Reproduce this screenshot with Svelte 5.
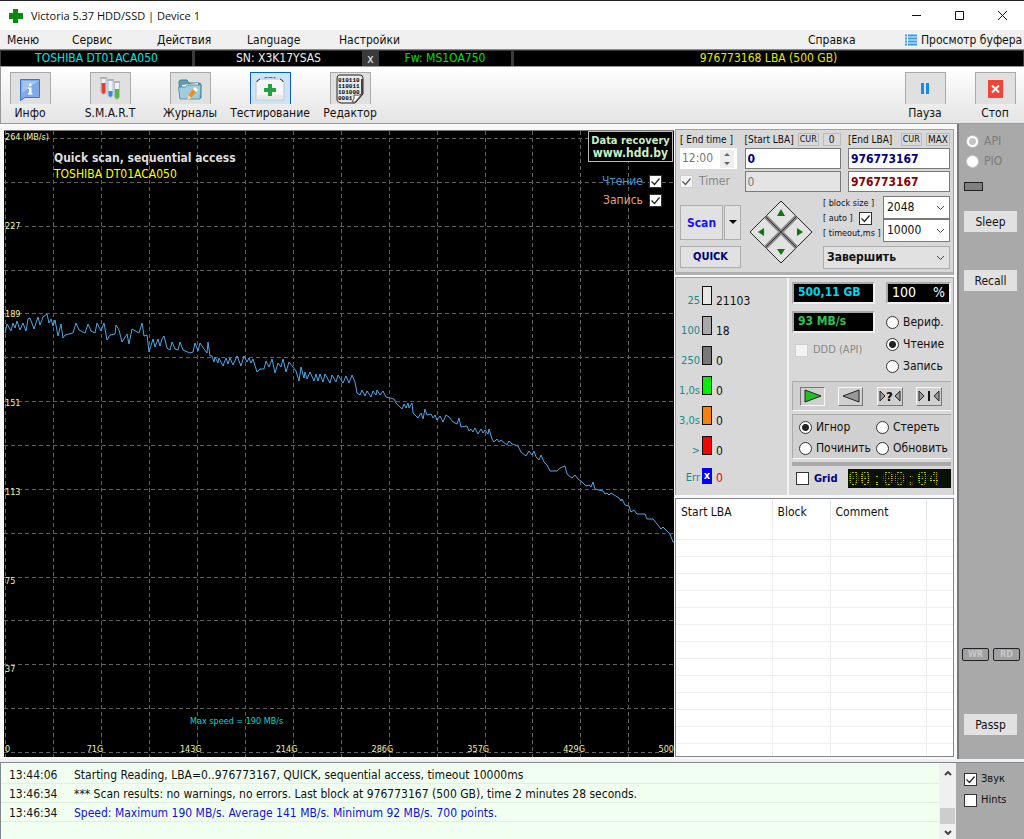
<script lang="ts">
  const menu = ['Меню', 'Сервис', 'Действия', 'Language', 'Настройки'];

  const yLabels = ['264 (MB/s)', '227', '189', '151', '113', '75', '37'];
  const xLabels = ['71G', '143G', '214G', '286G', '357G', '429G'];

  const gridX = Array.from({ length: 14 }, (_, i) => 1.5 + Math.round(i * 47.95));
  const gridY = Array.from({ length: 15 }, (_, i) => 7.5 + Math.round(i * 43.85));

  // x,y pairs in a 670x626 plot
  const speed = `1,202 3,193 7,200 9,192 11,197 13,190 16,199 19,192 22,200 24,188 26,187 30,198 34,186 36,194
    39,186 43,183 45,192 47,188 49,195 51,189 54,205 57,193 59,207 61,204 69,202 72,192 75,199 81,202 84,193
    87,200 91,202 93,192 97,200 100,192 103,209 106,204 111,203 112,194 115,199 118,211 123,203 125,213 128,198
    135,202 138,192 140,205 143,204 145,221 149,208 151,216 154,208 156,215 158,208 160,205 163,217 166,219
    168,211 171,218 174,219 176,211 179,219 186,222 189,221 191,212 194,220 196,212 200,218 203,222 204,211
    206,225 208,225 210,231 211,226 214,232 215,227 219,235 222,227 224,233 226,227 229,234 233,225 237,235
    240,225 243,231 245,227 247,232 249,228 253,241 256,238 260,238 262,230 265,236 268,228 271,242 274,232
    277,236 279,228 282,241 285,231 289,236 292,240 295,250 297,236 300,247 301,241 303,248 306,241 310,250
    312,243 314,250 316,243 319,251 321,243 326,252 328,244 332,251 334,244 339,252 342,245 345,252 348,244
    351,251 353,262 356,264 358,259 361,265 363,260 367,266 369,260 372,264 373,259 376,264 379,260 382,266
    386,267 390,268 392,272 398,278 400,273 402,277 404,272 405,277 408,272 409,282 414,287 417,282 419,288
    421,278 423,284 427,283 429,287 431,284 433,289 436,285 439,291 442,284 445,286 449,291 453,293 455,287
    457,296 463,295 465,300 467,298 469,301 471,297 474,303 477,298 479,302 481,299 484,303 485,298 488,308
    490,311 493,308 495,311 497,309 503,314 505,310 508,313 514,315 517,321 522,325 525,320 528,324 530,320
    532,326 535,329 537,324 540,331 543,334 546,340 553,340 556,337 561,335 563,343 568,347 571,344 574,348
    578,351 582,355 585,354 587,356 589,351 591,358 599,360 601,363 603,362 605,364 607,362 615,367 617,370
    618,368 621,374 625,375 627,381 630,379 633,383 641,383 643,388 649,388 653,393 657,398 659,396 666,403
    669,411 670,411`;

  const blocks = [
    { name: '25', count: '21103', kind: 'b25' },
    { name: '100', count: '18', kind: 'b100' },
    { name: '250', count: '0', kind: 'b250' },
    { name: '1,0s', count: '0', kind: 'b1s' },
    { name: '3,0s', count: '0', kind: 'b3s' },
    { name: '>', count: '0', kind: 'more' },
    { name: 'Err', count: '0', kind: 'err' }
  ];

  const log = [
    { time: '13:44:06', text: 'Starting Reading, LBA=0..976773167, QUICK, sequential access, timeout 10000ms', info: false },
    { time: '13:46:34', text: '*** Scan results: no warnings, no errors. Last block at 976773167 (500 GB), time 2 minutes 28 seconds.', info: false },
    { time: '13:46:34', text: 'Speed: Maximum 190 MB/s. Average 141 MB/s. Minimum 92 MB/s. 700 points.', info: true }
  ];

  const emptyRows = Array(13).fill(0);

  let mode = $state('read');
  let action = $state('ignore');
  let iface = $state('api');
  let showRead = $state(true);
  let showWrite = $state(true);
  let auto = $state(true);
  let sound = $state(true);
</script>

<div class="window">
  <header class="titlebar">
    <svg width="16" height="16" viewBox="0 0 16 16"><path d="M5 1h5v4h5v6h-5v4H5v-4H1V5h4z" fill="#0a8a0a" /></svg>
    <span class="title">Victoria 5.37 HDD/SSD | Device 1</span>
    <button class="win" aria-label="Minimize"><svg width="11" height="11"><path d="M1 5.5h9" stroke="#111" /></svg></button>
    <button class="win" aria-label="Maximize"><svg width="11" height="11"><path d="M1.5 1.5h8v8h-8z" fill="none" stroke="#111" /></svg></button>
    <button class="win" aria-label="Close"><svg width="11" height="11"><path d="M1 1l9 9M10 1l-9 9" stroke="#111" /></svg></button>
  </header>

  <nav class="menubar">
    {#each menu as item}
      <button>{item}</button>
    {/each}
    <button>Справка</button>
    <button class="buffer">
      <svg width="12" height="12"><path d="M0 1.5h2M3 1.5h9M0 4.5h2M3 4.5h9M0 7.5h2M3 7.5h9M0 10.5h2M3 10.5h9" stroke="#3b9be8" stroke-width="2" /></svg>
      Просмотр буфера
    </button>
  </nav>

  <div class="device">
    <span class="model">TOSHIBA DT01ACA050</span>
    <span>SN: X3K17YSAS</span>
    <button aria-label="Hide serial number">x</button>
    <span class="fw">Fw: MS1OA750</span>
    <span class="lba">976773168 LBA (500 GB)</span>
  </div>

  <div class="toolbar">
    <button class="tool">
      <span class="pic">
        <svg width="22" height="24" viewBox="0 0 22 24">
          <path d="M1.5 2.5h19v18H6l-4.500 3z" fill="#7eaae9" stroke="#3f73c4" />
          <path d="M3 4h16L3 16z" fill="#a3c4f3" />
          <path d="M10 6.500h2.500v2.500H10zM9 10.500h3.500v5.500h1v1.500H9V16h1v-4H9z" fill="#fff" />
        </svg>
      </span>
      Инфо
    </button>
    <button class="tool">
      <span class="pic">
        <svg width="22" height="26" viewBox="0 0 22 26">
          <path d="M2 2v14q2.500 5 5 0V2z" fill="#eef3f8" stroke="#b4bcc6" /><path d="M2.500 7h4v9q-2 4-4 0z" fill="#e0402e" />
          <path d="M9 4v15q2.500 5 5 0V4z" fill="#eef3f8" stroke="#b4bcc6" /><path d="M9.500 15h4v4q-2 4-4 0z" fill="#2f8ae8" />
          <path d="M15.500 6v15q2.500 5 5 0V6z" fill="#eef3f8" stroke="#b4bcc6" /><path d="M16 13h4v8q-2 4-4 0z" fill="#53bb3c" />
          <path d="M1 2h7M8 4h7M15 6h6" stroke="#8d959e" />
        </svg>
      </span>
      S.M.A.R.T
    </button>
    <button class="tool">
      <span class="pic">
        <svg width="24" height="24" viewBox="0 0 24 24">
          <path d="M1 5q0-2 2-2h6l2 3h10q2 0 2 2v13H2z" fill="#5e9cb2" stroke="#457f95" />
          <path d="M4 8l16-2v6H4z" fill="#eef6f8" />
          <path d="M0.500 10h7l2-2h13.500l-1 14H2z" fill="#9fcddb" stroke="#5795aa" />
          <path d="M9 23l1.500-5L15 12l3 3-5 6z" fill="#f28c1c" /><path d="M9 23l1.500-5 3 3z" fill="#f8e2b8" />
          <path d="M15 12l2-2 3 3-2 2z" fill="#fff" />
        </svg>
      </span>
      Журналы
    </button>
    <button class="tool active">
      <span class="pic">
        <svg width="32" height="26" viewBox="0 0 32 26">
          <path d="M11 3V1.500h10V3" fill="none" stroke="#666" stroke-dasharray="4 1" />
          <path d="M5 3h22l3 3v18H2V6z" fill="#f5f6f6" stroke="#c2c6ca" />
          <path d="M3 6v-1l3-2M26 3l3 2v1" stroke="#333" fill="none" /><path d="M3 19h26v4H3z" fill="#e6e8e9" />
          <path d="M14 8h4v4h4v4h-4v4h-4v-4h-4v-4h4z" fill="#21a343" />
        </svg>
      </span>
      Тестирование
    </button>
    <button class="tool">
      <span class="pic">
        <svg width="28" height="30" viewBox="0 0 28 30">
          <path d="M3 1h21q3 0 3 3v16l-8 9H6q-5 0-5-4V5q0-4 2-4z" fill="#e9e9e9" stroke="#222" />
          <path d="M26 5v15l-7 8" fill="none" stroke="#444" stroke-width="2" />
          <path d="M16 28q3-3 2-7 5 1 8-1l-7 8z" fill="#fff" stroke="#555" />
          <g class="bits"><text x="2" y="8">010110</text><text x="2" y="14">110011</text><text x="2" y="20">101000</text><text x="2" y="26">0001</text></g>
        </svg>
      </span>
      Редактор
    </button>
    <span class="spacer"></span>
    <button class="tool side">
      <span class="pic"><svg width="10" height="12"><path d="M1 0h3v11H1zM6 0h3v11H6z" fill="#168af5" /></svg></span>
      Пауза
    </button>
    <button class="tool side">
      <span class="pic"><svg width="15" height="18"><path d="M0 0h15v18H0z" fill="#f04438" /><path d="M4 5.500l7 7M11 5.500l-7 7" stroke="#fff" stroke-width="2" /></svg></span>
      Стоп
    </button>
  </div>

  <main>
    <section class="graph">
      <svg class="plot" viewBox="0 0 670 626" preserveAspectRatio="none">
        <g class="grid">
          {#each gridX as x}
            <line x1={x} x2={x} y1="0" y2="626" />
          {/each}
          {#each gridY as y}
            <line x1="0" x2="670" y1={y} y2={y} />
          {/each}
        </g>
        <polyline points={speed} />
      </svg>
      <div class="y-axis">
        {#each yLabels as label}
          <span>{label}</span>
        {/each}
      </div>
      <div class="x-axis">
        <span class="zero">0</span>
        {#each xLabels as label}
          <span>{label}</span>
        {/each}
        <span class="end">500</span>
      </div>
      <div class="caption">
        <b>Quick scan, sequential access</b>
        <span>TOSHIBA DT01ACA050</span>
      </div>
      <a class="recovery" href="http://www.hdd.by">Data recovery<span>www.hdd.by</span></a>
      <div class="legend">
        <label class="read">Чтение <input type="checkbox" bind:checked={showRead} /></label>
        <label class="write">Запись <input type="checkbox" bind:checked={showWrite} /></label>
      </div>
      <span class="max">Max speed = 190 MB/s</span>
    </section>

    <section class="panels">
      <div class="box params">
        <div class="lba-grid">
          <label for="endtime">[ End time ]</label>
          <div class="head"><label for="start">[Start LBA]</label><button>CUR</button><button>0</button></div>
          <div class="head"><label for="end">[End LBA]</label><button>CUR</button><button>MAX</button></div>
          <div class="time">
            <input id="endtime" value="12:00" disabled />
            <svg width="14" height="18"><path d="M0 0h14v18H0z" fill="#eee" /><path d="M4 6l3-3 3 3zM4 12l3 3 3-3z" fill="#666" /></svg>
          </div>
          <input id="start" class="num" value="0" />
          <input id="end" class="num" value="976773167" />
          <label class="timer"><input type="checkbox" checked disabled /> Timer</label>
          <input class="num off" value="0" disabled aria-label="Current start LBA" />
          <input class="num red" value="976773167" aria-label="Current end LBA" />
        </div>
        <div class="scan-row">
          <div class="scan">
            <button class="go">Scan</button>
            <button class="drop" aria-label="Scan options"><svg width="8" height="5"><path d="M0 0h8L4 4z" /></svg></button>
            <button class="quick">QUICK</button>
          </div>
          <svg class="pad" width="64" height="64" viewBox="0 0 64 64">
            <path d="M32 1l31 31-31 31L1 32z" fill="#e2e2e2" stroke="#222" />
            <path d="M16.500 16.500l31 31M47.500 16.500l-31 31" stroke="#888" stroke-width="4" />
            <path d="M16.500 16.500l31 31M47.500 16.500l-31 31" stroke="#333" />
            <path d="M28 16l4-7 4 7zM28 49l4 6 4-6zM15 28l-6 4 6 4zM48 28l6 4-6 4z" fill="#087a08" />
          </svg>
          <div class="opts">
            <div class="opt-labels">
              <label for="bsize">[ block size ]</label>
              <label>[ auto ] <input type="checkbox" bind:checked={auto} /></label>
              <label for="tout">[ timeout,ms ]</label>
            </div>
            <div class="opt-selects">
              <select id="bsize"><option>2048</option></select>
              <select id="tout"><option>10000</option></select>
            </div>
            <select class="finish" aria-label="When finished"><option>Завершить</option></select>
          </div>
        </div>
      </div>

      <div class="box stats">
        <div class="blocks">
          {#each blocks as b}
            <div class="block">
              <span class="name">{b.name}</span>
              <i class={b.kind}>{b.kind === 'err' ? 'x' : ''}</i>
              <span class={b.kind === 'err' ? 'count bad' : 'count'}>{b.count}</span>
            </div>
          {/each}
        </div>
        <div class="control">
          <div class="readouts">
            <div class="left">
              <output class="lcd cyan">500,11 GB</output>
              <output class="lcd green">93 MB/s</output>
              <label class="ddd"><input type="checkbox" disabled /> DDD (API)</label>
            </div>
            <div class="right">
              <output class="lcd percent"><span>100</span><span>%</span></output>
              <label><input type="radio" value="verify" bind:group={mode} /> Вериф.</label>
              <label><input type="radio" value="read" bind:group={mode} /> Чтение</label>
              <label><input type="radio" value="write" bind:group={mode} /> Запись</label>
            </div>
          </div>
          <div class="moves">
            <button class="pressed" aria-label="Forward"><svg width="20" height="14"><path d="M2 1l16 6-16 6z" fill="#1ec41e" stroke="#222" /></svg></button>
            <button aria-label="Backward"><svg width="20" height="14"><path d="M18 1L2 7l16 6z" fill="#999" stroke="#222" /></svg></button>
            <button aria-label="Random"><svg width="24" height="14"><path d="M2 2l5 5-5 5zM22 2l-5 5 5 5z" fill="#999" stroke="#222" /><text x="8" y="12">?</text></svg></button>
            <button aria-label="Butterfly"><svg width="24" height="14"><path d="M2 2l5 5-5 5zM22 2l-5 5 5 5z" fill="#999" stroke="#222" /><path d="M12 2v10" stroke="#111" stroke-width="2" /></svg></button>
          </div>
          <div class="actions">
            <label><input type="radio" value="ignore" bind:group={action} /> Игнор</label>
            <label><input type="radio" value="erase" bind:group={action} /> Стереть</label>
            <label><input type="radio" value="remap" bind:group={action} /> Починить</label>
            <label><input type="radio" value="refresh" bind:group={action} /> Обновить</label>
          </div>
          <hr />
          <div class="clock-row">
            <label><input type="checkbox" /> Grid</label>
            <output class="clock">00:00:04</output>
          </div>
        </div>
      </div>

      <div class="defects">
        <table>
          <thead>
            <tr><th class="c1">Start LBA</th><th class="c2">Block</th><th class="c3">Comment</th><th></th></tr>
          </thead>
          <tbody>
            {#each emptyRows as _}
              <tr><td></td><td></td><td></td><td></td></tr>
            {/each}
            <tr class="rest"><td></td><td></td><td></td><td></td></tr>
          </tbody>
        </table>
      </div>
    </section>

    <aside>
      <label class="dim"><input type="radio" value="api" bind:group={iface} disabled /> API</label>
      <label class="dim"><input type="radio" value="pio" bind:group={iface} disabled /> PIO</label>
      <i class="lamp"></i>
      <button class="sleep">Sleep</button>
      <button class="recall">Recall</button>
      <div class="leds"><span>WR</span><span>RD</span></div>
      <button class="passp">Passp</button>
    </aside>
  </main>

  <footer>
    <div class="log">
      {#each log as line}
        <p class:info={line.info}><time>{line.time}</time>{line.text}</p>
      {/each}
    </div>
    <div class="scrollbar">
      <svg width="8" height="5"><path d="M1 4l3-3 3 3" /></svg>
      <i></i>
      <svg width="8" height="5"><path d="M1 1l3 3 3-3" /></svg>
    </div>
    <div class="switches">
      <label><input type="checkbox" bind:checked={sound} /> Звук</label>
      <label><input type="checkbox" /> Hints</label>
    </div>
  </footer>
</div>

<style>
  :global(body) {
    margin: 0;
    background: #f0f0f0;
  }

  .window, .window * {
    box-sizing: border-box;
  }

  .window {
    min-height: 100vh;
    display: flex;
    flex-direction: column;
    border-top: 1px solid #222;
    font-family: "DejaVu Sans Condensed", "Noto Sans", sans-serif;
    font-size: 12px;
    line-height: 16px;
    color: #111;
    white-space: nowrap;
  }

  button, input, select {
    font: inherit;
    color: inherit;
    margin: 0;
    padding: 0;
    border: 0;
    border-radius: 0;
    background: none;
  }

  svg {
    display: block;
    flex: none;
  }

  label {
    display: flex;
    align-items: center;
  }

  input[type="checkbox"], input[type="radio"] {
    appearance: none;
    flex: none;
    width: 13px;
    height: 13px;
    background: #fff;
    border: 1px solid #333;
  }

  input[type="radio"] {
    border-radius: 50%;
  }

  input[type="radio"]:checked {
    background: radial-gradient(circle, #222 3px, #fff 4px);
  }

  input[type="checkbox"]:checked {
    background: #fff url("data:image/svg+xml,%3Csvg xmlns='http://www.w3.org/2000/svg' viewBox='0 0 11 11'%3E%3Cpath d='M1.500 5.500l3 3 5-6' fill='none' stroke='%23222' stroke-width='1.200'/%3E%3C/svg%3E") center / 11px 11px no-repeat;
  }

  input[type="checkbox"]:disabled {
    border-color: #ccc;
    opacity: 0.7;
  }

  input[type="radio"]:disabled {
    border-color: #c4c4c4;
  }

  input[type="radio"]:disabled:checked {
    background: radial-gradient(circle, #c4c4c4 3px, #fff 4px);
  }

  .titlebar {
    height: 29px;
    display: flex;
    align-items: center;
    padding-left: 8px;
    background: #fff;
    font-family: "Open Sans", "Noto Sans", sans-serif;
    font-size: 11px;
  }

  .title {
    flex: 1;
    padding-left: 7px;
  }

  .win {
    width: 43px;
    height: 28px;
    display: flex;
    align-items: center;
    justify-content: center;
  }

  .menubar {
    height: 19px;
    display: grid;
    grid-template-columns: 65px 85px 90px 92px 1fr 97px 119px;
    align-items: center;
    padding-left: 7px;
    background: #f0f0f0;
  }

  .menubar button {
    text-align: left;
    font-size: 12px;
    line-height: 16px;
  }

  .menubar .buffer {
    display: flex;
    align-items: center;
    gap: 4px;
  }

  .device {
    height: 17px;
    display: grid;
    grid-template-columns: 191px 167px 11px 132px 1fr;
    gap: 3px;
    padding: 1px;
    background: #3a3a3a;
    border-top: 1px solid #888;
    text-align: center;
    line-height: 15px;
    color: #eee;
  }

  .device span {
    background: #000;
  }

  .device button {
    line-height: 14px;
  }

  .device .model { color: #00e5e5; }
  .device .fw { color: #00e000; }
  .device .lba { color: #e5e500; }

  .toolbar {
    height: 58px;
    display: flex;
    gap: 22px;
    padding: 5px 5px 0 0;
    border: solid #999;
    border-width: 1px 0 1px 1px;
    background: linear-gradient(#fff, #e4e4e4);
  }

  .tool {
    width: 58px;
    display: flex;
    flex-direction: column;
    align-items: center;
    gap: 1px;
  }

  .tool.side {
    width: 48px;
  }

  .pic {
    width: 41px;
    height: 32px;
    flex: none;
    display: flex;
    align-items: center;
    justify-content: center;
    background: #e0e0e0;
    border: 1px solid #aaa;
    border-bottom: 0;
  }

  .active .pic {
    background: #cce4f7;
    border-color: #0a64ad;
  }

  .bits {
    font: bold 6px "Liberation Mono", monospace;
  }

  .spacer {
    flex: 1;
  }

  main {
    flex: 1;
    display: flex;
    background: #f8f8f8;
  }

  .graph {
    flex: 1;
    min-width: 0;
    position: relative;
    margin: 6px 1px 2px 4px;
    border-top: 1px solid #777;
    background: #000;
    overflow: hidden;
  }

  .plot {
    position: absolute;
    width: 100%;
    height: 100%;
  }

  .grid line {
    stroke: #606060;
    stroke-dasharray: 4 3;
    vector-effect: non-scaling-stroke;
  }

  .plot polyline {
    fill: none;
    stroke: #4aa8e8;
    vector-effect: non-scaling-stroke;
  }

  .y-axis {
    position: absolute;
    inset: 0 auto 5px 1px;
    display: flex;
    flex-direction: column;
    font-size: 9px;
    line-height: 12px;
    color: #f0f0a0;
  }

  .y-axis span {
    flex: 1;
  }

  .x-axis {
    position: absolute;
    inset: auto 0 2px 1px;
    display: flex;
    font-size: 9px;
    line-height: 12px;
    color: #f0f0a0;
  }

  .x-axis span {
    flex: 1;
    text-align: center;
  }

  .x-axis .zero {
    flex: 0 0 42px;
    text-align: left;
  }

  .x-axis .end {
    flex: 0 0 52px;
    text-align: right;
  }

  .caption {
    position: absolute;
    top: 19px;
    left: 50px;
    display: flex;
    flex-direction: column;
    color: #ff0;
  }

  .caption b {
    color: #ddd;
  }

  .recovery {
    position: absolute;
    top: 0;
    right: 1px;
    width: 85px;
    padding: 3px 0 2px;
    border: 1px solid #bbb;
    background: #000;
    color: #c8eec0;
    font-size: 11px;
    font-weight: bold;
    line-height: 12px;
    text-align: center;
    text-decoration: none;
  }

  .recovery span {
    display: block;
    font-size: 12px;
  }

  .legend {
    position: absolute;
    top: 42px;
    right: 12px;
    display: flex;
    flex-direction: column;
    gap: 3px;
  }

  .legend label {
    justify-content: flex-end;
    gap: 6px;
  }

  .legend .read { color: #3a9ad8; }
  .legend .write { color: #e8a060; }

  .max {
    position: absolute;
    left: 186px;
    bottom: 30px;
    font-size: 9px;
    line-height: 12px;
    color: #00d8d8;
  }

  .panels {
    flex: 0 0 281px;
    display: flex;
    flex-direction: column;
    padding: 5px 2px 2px 0;
  }

  .box {
    background: #d8d8d8;
    border: solid #a0a0a0;
    border-width: 1px 1px 0 1px;
  }

  .params {
    padding: 3px 3px 3px 4px;
    border-bottom: 3px solid #b0b0b0;
    margin-bottom: 2px;
  }

  .lba-grid {
    display: grid;
    grid-template-columns: 57px 96px 102px;
    justify-content: space-between;
    grid-template-rows: 13px 21px 21px;
    row-gap: 2px;
    align-items: center;
    font-size: 11px;
    line-height: 13px;
  }

  .lba-grid > label:first-child, .head {
    font-size: 10px;
  }

  .head {
    display: flex;
    gap: 4px;
  }

  .head label {
    flex: 1;
  }

  .head button {
    min-width: 18px;
    padding: 0 1px;
    border: 1px solid #bbb;
    font-size: 9px;
    line-height: 11px;
  }

  .head button:last-child {
    font-size: 10px;
  }

  .time {
    display: flex;
    align-items: center;
    padding: 0 3px 0 2px;
    background: #fff;
    height: 21px;
  }

  .time input {
    flex: 1;
    min-width: 0;
    font-size: 12px;
    color: #777;
  }

  .num {
    width: 100%;
    height: 21px;
    padding: 0 2px;
    background: #fff;
    border: 1px solid #7a7a7a;
    font-size: 12px;
    font-weight: bold;
    color: #00007a;
  }

  .num.off {
    background: #e4e4e4;
    font-weight: normal;
    color: #777;
  }

  .num.red {
    color: #8b0000;
  }

  .timer {
    gap: 6px;
    font-size: 12px;
    color: #888;
  }

  .scan-row {
    display: flex;
    gap: 8px;
    margin-top: 4px;
  }

  .scan {
    display: grid;
    grid-template-columns: 43px 17px;
    grid-template-rows: 35px 22px;
    gap: 6px 1px;
    align-content: center;
    padding-top: 8px;
  }

  .scan button {
    border: 1px solid #adadad;
    background: #e1e1e1;
  }

  .scan .go {
    font-weight: bold;
    color: #1414f0;
  }

  .scan .drop {
    display: flex;
    align-items: center;
    justify-content: center;
  }

  .scan .quick {
    grid-column: 1 / 3;
    font-size: 11px;
    font-weight: bold;
    color: #00007a;
  }

  .pad {
    margin-top: 4px;
  }

  .opts {
    flex: 1;
    display: grid;
    grid-template-columns: 60px 1fr;
    row-gap: 3px;
    padding-left: 2px;
    font-size: 9px;
    line-height: 15px;
  }

  .opt-labels label {
    height: 15px;
    gap: 6px;
  }

  .opt-selects {
    display: flex;
    flex-direction: column;
  }

  select {
    appearance: none;
    height: 23px;
    padding-left: 3px;
    border: 1px solid #7a7a7a;
    font-size: 12px;
    background: #fff url("data:image/svg+xml,%3Csvg xmlns='http://www.w3.org/2000/svg' viewBox='0 0 9 6'%3E%3Cpath d='M1 1l3.500 3.500L8 1' fill='none' stroke='%23444'/%3E%3C/svg%3E") right 4px center / 9px 6px no-repeat;
  }

  .finish {
    grid-column: 1 / 3;
    margin-top: 1px;
    border-color: #adadad;
    background-color: #e1e1e1;
    font-weight: bold;
  }

  .stats {
    display: flex;
  }

  .blocks {
    width: 113px;
    display: flex;
    flex-direction: column;
    border-right: 2px solid #f4f4f4;
  }

  .block {
    height: 30px;
    display: grid;
    grid-template-columns: 24px 10px 1fr;
    align-items: end;
    column-gap: 2px;
    font-size: 12px;
    line-height: 14px;
  }

  .block:last-child {
    height: 27px;
  }

  .block .name {
    text-align: right;
    font-size: 11px;
    color: #1a8a8a;
  }

  .block .count {
    padding-left: 2px;
  }

  .block i {
    width: 10px;
    height: 19px;
    margin-bottom: 3px;
    border: 1px solid #111;
    text-align: center;
    font-style: normal;
    font-weight: bold;
    font-size: 11px;
  }

  .b25 { background: #e8e8e8; }
  .b100 { background: #a8a8a8; }
  .b250 { background: #787878; }
  .b1s { background: #00f000; }
  .b3s { background: #ff8000; }
  .more { background: #f00; }

  .block .err {
    background: #00f;
    border-color: #00f;
    color: #fff;
    height: 16px;
    margin-bottom: 1px;
    line-height: 13px;
  }

  .bad {
    color: #e00;
  }

  .control {
    flex: 1;
    padding: 4px 2px 7px 3px;
    display: flex;
    flex-direction: column;
    gap: 3px;
  }

  .readouts {
    display: flex;
    justify-content: space-between;
    height: 96px;
  }

  .readouts .left {
    width: 83px;
    display: flex;
    flex-direction: column;
    gap: 7px;
  }

  .readouts .right {
    width: 65px;
    display: flex;
    flex-direction: column;
    gap: 6px;
  }

  .lcd {
    display: block;
    height: 22px;
    padding-left: 4px;
    background: #000;
    border: 2px solid #aaa;
    border-right-color: #f0f0f0;
    border-bottom-color: #f0f0f0;
    line-height: 17px;
    font-weight: bold;
    font-size: 12px;
  }

  .cyan { color: #00d8e8; }
  .green { color: #30c050; }

  .percent {
    display: flex;
    justify-content: space-between;
    margin-bottom: 4px;
    padding: 0 4px;
    font-weight: normal;
    font-size: 14px;
    color: #fff;
  }

  .right label, .actions label {
    gap: 4px;
  }

  .ddd {
    padding: 2px 0 0 3px;
    gap: 5px;
    font-size: 11px;
    color: #888;
  }

  .moves, .actions {
    border: solid #aaa;
    border-width: 1px 0 0 1px;
    border-bottom: 1px solid #f8f8f8;
    background: #d0d0d0;
  }

  .moves {
    height: 30px;
    display: flex;
    align-items: center;
    justify-content: space-between;
    padding: 0 9px 0 7px;
  }

  .moves button {
    height: 19px;
    min-width: 25px;
    display: flex;
    align-items: center;
    justify-content: center;
    border: 1px solid #f8f8f8;
    border-right-color: #777;
    border-bottom-color: #777;
  }

  .moves .pressed {
    border-color: #777 #f8f8f8 #f8f8f8 #777;
  }

  .moves text {
    font-size: 13px;
    font-weight: bold;
  }

  .actions {
    display: grid;
    grid-template-columns: 77px 1fr;
    row-gap: 5px;
    padding: 4px 0 2px 6px;
  }

  hr {
    width: 100%;
    height: 4px;
    margin: 0;
    border: 0;
    background: #aaa;
  }

  .clock-row {
    display: flex;
    align-items: center;
    justify-content: space-between;
    padding-left: 4px;
  }

  .clock-row label {
    gap: 5px;
    font-size: 11px;
    font-weight: bold;
    color: #00007a;
  }

  .clock {
    width: 103px;
    height: 19px;
    position: relative;
    background: #081008;
    font: 19px "DejaVu Sans Mono", monospace;
    line-height: 19px;
    color: #c8c800;
  }

  /* dot-matrix mask */
  .clock::after {
    content: "";
    position: absolute;
    inset: 0;
    background:
      repeating-linear-gradient(#081008 0 1px, transparent 1px 2px),
      repeating-linear-gradient(90deg, #081008 0 1px, transparent 1px 3px);
  }

  .defects {
    flex: 1;
    margin-top: 3px;
    border: 1px solid #828790;
    background: #fff;
    display: flex;
  }

  table {
    width: 100%;
    border-collapse: collapse;
    table-layout: fixed;
  }

  th {
    height: 23px;
    padding: 2px 0 0 5px;
    text-align: left;
    font-weight: normal;
    border-right: 1px solid #e8e8e8;
  }

  .c1 { width: 96px; }
  .c2 { width: 58px; }
  .c3 { width: 96px; }

  td {
    height: 17px;
    padding: 0;
    border: solid #eee;
    border-width: 0 1px 1px 0;
  }

  th:last-child, td:last-child {
    border-right: 0;
  }

  .rest td {
    height: auto;
    border-bottom: 0;
  }

  aside {
    flex: 0 0 67px;
    display: flex;
    flex-direction: column;
    margin-left: 1px;
    padding: 9px 6px 24px 7px;
    background: #a9a9a9;
    border-left: 2px solid #787878;
  }

  .dim {
    gap: 5px;
    margin-bottom: 4px;
    color: #7a7a7a;
  }

  aside button {
    height: 21px;
    width: 53px;
    margin-left: -2px;
    background: #e1e1e1;
  }

  .lamp {
    width: 19px;
    height: 9px;
    margin-top: 9px;
    margin-left: -2px;
    background: #808080;
    border: 1px solid #222;
  }

  .sleep {
    margin-top: 20px;
  }

  .recall {
    margin-top: 38px;
  }

  .leds {
    display: flex;
    gap: 4px;
    margin: auto -2px 53px -4px;
  }

  .leds span {
    width: 27px;
    height: 13px;
    border: 1px solid #222;
    border-radius: 2px;
    background: #a0a0a0;
    text-align: center;
    font-size: 9px;
    font-weight: bold;
    line-height: 11px;
    color: #c8c8c8;
  }

  footer {
    height: 77px;
    display: flex;
    margin-top: 3px;
    border-top: 1px solid #828790;
  }

  .log {
    flex: 1;
    min-width: 0;
    padding-top: 2px;
    background: #f0fff0;
    border-left: 1px solid #828790;
  }

  .log p {
    display: flex;
    height: 19px;
    margin: 0;
    padding-left: 8px;
    border-bottom: 1px solid #e4efe4;
    line-height: 21px;
  }

  .log time {
    width: 65px;
    color: #111;
  }

  .log .info {
    color: #1010e0;
  }

  .scrollbar {
    width: 17px;
    display: flex;
    flex-direction: column;
    align-items: center;
    padding: 8px 1px 4px;
    background: #f0f0f0;
  }

  .scrollbar svg {
    fill: none;
    stroke: #444;
    stroke-width: 2;
  }

  .scrollbar i {
    width: 15px;
    height: 16px;
    margin: auto 0 6px;
    background: #cdcdcd;
  }

  .switches {
    width: 68px;
    padding: 8px 0 0 8px;
    background: #a9a9a9;
    display: flex;
    flex-direction: column;
    gap: 5px;
    font-size: 11px;
  }

  .switches label {
    gap: 4px;
  }
</style>
